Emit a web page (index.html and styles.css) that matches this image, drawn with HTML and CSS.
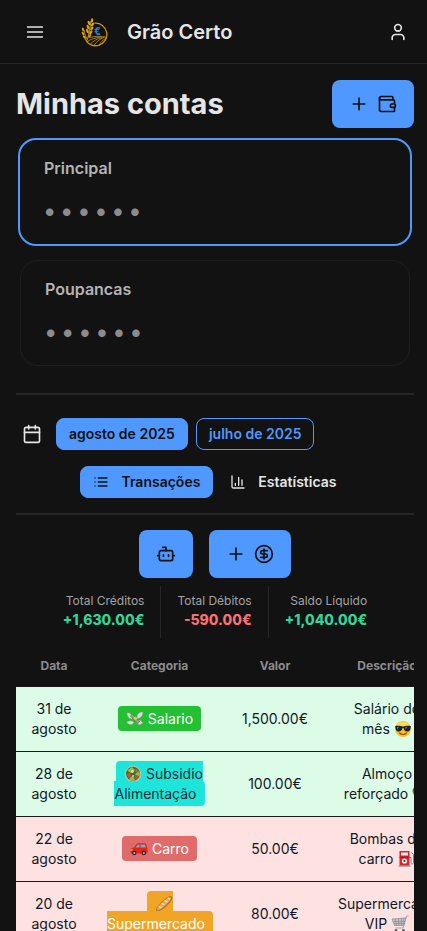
FILE: index.html
```html
<!DOCTYPE html>
<html lang="pt">
<head>
<meta charset="utf-8">
<meta name="viewport" content="width=device-width, initial-scale=1">
<title>Grão Certo</title>
<link rel="stylesheet" href="styles.css">
</head>
<body>
<header class="topbar">
  <button class="icon-btn menu-btn" type="button" aria-label="Menu">
    <svg class="icon icon-menu" viewBox="0 0 20 20"><path d="M2 5h16M2 10h16M2 15h16"/></svg>
  </button>
  <a class="brand" href="#">
    <svg class="logo" viewBox="0 0 30 30" aria-hidden="true">
      <g fill="none" stroke="#c8940f">
        <path stroke-width="1.3" d="M14.500 6.200A11.300 11.300 0 1 1 5 21.500"/>
        <path stroke-width=".8" d="M10 20.600c5-1.800 11-1.600 16.800-.3M7 25c3-2.600 8-4.200 13.500-5M10 27.500c3-3.500 7-5.800 12.500-7.200M14 28.500c2-3.500 5.500-6.500 10.500-8.300M19 28.500c1-2.500 3.500-5.500 7-7.300"/>
        <path stroke-width="1" d="M11 4c-.8 6-1.800 11-3.400 18M4 13c.5 4 2 7.500 4 10.500"/>
      </g>
      <g fill="#d9a514">
        <ellipse cx="12" cy="3.400" rx="1.200" ry="2.300" transform="rotate(12 12 3.400)"/>
        <ellipse cx="9" cy="6" rx="1.200" ry="2.300" transform="rotate(-22 9 6)"/>
        <ellipse cx="12.500" cy="7.500" rx="1.200" ry="2.300" transform="rotate(38 12.500 7.500)"/>
        <ellipse cx="8" cy="10" rx="1.200" ry="2.300" transform="rotate(-22 8 10)"/>
        <ellipse cx="11.800" cy="11.500" rx="1.200" ry="2.300" transform="rotate(38 11.800 11.500)"/>
        <ellipse cx="7.400" cy="14" rx="1.200" ry="2.300" transform="rotate(-22 7.400 14)"/>
        <ellipse cx="10.800" cy="15.500" rx="1.200" ry="2.300" transform="rotate(38 10.800 15.500)"/>
        <ellipse cx="3" cy="12.500" rx="1" ry="2" transform="rotate(-12 3 12.500)"/>
        <ellipse cx="3" cy="16.500" rx="1" ry="2" transform="rotate(-32 3 16.500)"/>
        <ellipse cx="4.300" cy="20" rx="1" ry="2" transform="rotate(-42 4.300 20)"/>
        <ellipse cx="9.800" cy="19" rx="1" ry="2" transform="rotate(35 9.800 19)"/>
      </g>
      <text class="logo-euro" x="14" y="18">€</text>
    </svg>
    <span class="brand-name">Grão Certo</span>
  </a>
  <button class="icon-btn user-btn" type="button" aria-label="Perfil">
    <svg class="icon" viewBox="0 0 24 24"><path d="M19 21v-2a4 4 0 0 0-4-4H9a4 4 0 0 0-4 4v2"/><circle cx="12" cy="7" r="4"/></svg>
  </button>
</header>

<main class="page">
  <div class="title-row">
    <h1>Minhas contas</h1>
    <button class="btn-large" type="button" aria-label="Adicionar conta">
      <svg class="icon" viewBox="0 0 24 24"><path d="M5 12h14M12 5v14"/></svg>
      <svg class="icon" viewBox="0 0 24 24"><path d="M19 7V4a1 1 0 0 0-1-1H5a2 2 0 0 0 0 4h15a1 1 0 0 1 1 1v4h-3a2 2 0 0 0 0 4h3a1 1 0 0 0 1-1v-2a1 1 0 0 0-1-1"/><path d="M3 5v14a2 2 0 0 0 2 2h15a1 1 0 0 0 1-1v-4"/></svg>
    </button>
  </div>

  <section class="accounts">
    <article class="account account-active">
      <h2>Principal</h2>
      <p class="masked">• • • • • •</p>
    </article>
    <article class="account">
      <h2>Poupancas</h2>
      <p class="masked">• • • • • •</p>
    </article>
  </section>

  <section class="filters">
    <div class="months">
      <button class="icon-btn calendar-btn" type="button" aria-label="Calendário">
        <svg class="icon" viewBox="0 0 24 24"><path d="M8 2v4M16 2v4M3 10h18"/><rect x="3" y="4" width="18" height="18" rx="2"/></svg>
      </button>
      <button class="btn btn-solid" type="button">agosto de 2025</button>
      <button class="btn btn-outline" type="button">julho de 2025</button>
    </div>
    <div class="tabs">
      <button class="btn btn-solid" type="button">
        <svg class="icon icon-small" viewBox="0 0 24 24"><path d="M8 6h13M8 12h13M8 18h13M3 6h.01M3 12h.01M3 18h.01"/></svg>
        Transações
      </button>
      <button class="btn btn-ghost" type="button">
        <svg class="icon icon-small" viewBox="0 0 24 24"><path d="M3 3v16a2 2 0 0 0 2 2h16M18 17V9M13 17V5M8 17v-3"/></svg>
        Estatísticas
      </button>
    </div>
  </section>

  <div class="actions">
    <button class="btn-large" type="button" aria-label="Assistente">
      <svg class="icon" viewBox="0 0 24 24"><path d="M12 8V4H8M2 14h2M20 14h2M15 13v2M9 13v2"/><rect x="4" y="8" width="16" height="12" rx="2"/></svg>
    </button>
    <button class="btn-large" type="button" aria-label="Adicionar transação">
      <svg class="icon" viewBox="0 0 24 24"><path d="M5 12h14M12 5v14"/></svg>
      <svg class="icon" viewBox="0 0 24 24"><circle cx="12" cy="12" r="10"/><path d="M16 8h-6a2 2 0 1 0 0 4h4a2 2 0 1 1 0 4H8M12 18V6"/></svg>
    </button>
  </div>

  <dl class="totals">
    <div class="total"><dt>Total Créditos</dt><dd class="positive">+1,630.00€</dd></div>
    <div class="total"><dt>Total Débitos</dt><dd class="negative">-590.00€</dd></div>
    <div class="total"><dt>Saldo Líquido</dt><dd class="positive">+1,040.00€</dd></div>
  </dl>

  <div class="table-wrap">
    <table class="transactions">
      <colgroup><col class="col-date"><col class="col-category"><col class="col-amount"><col class="col-description"></colgroup>
      <thead>
        <tr><th scope="col">Data</th><th scope="col">Categoria</th><th scope="col">Valor</th><th scope="col">Descrição</th></tr>
      </thead>
      <tbody>
        <tr class="credit">
          <td>31 de agosto</td>
          <td><span class="tag tag-green"><svg class="emoji" viewBox="0 0 18 18"><g fill="#d9ddd5" stroke="#8e948b" stroke-width=".5"><path d="M7 7C5 3 2 2 .7 3c.8.7.3 1.200.8 2C.9 6 2 6.500 2.500 7 2 8 4 8.500 6 9zM11 7c0-3 3-5.500 6-5-.5 1-.2 1.500-.5 2.300.3 1-.8 1.300-1 2-.5 1.200-2 2-4 2.200zM6 11c-3-.5-5 .5-5.300 2 1 .2 1.300.7 2 1 .6.8 1.500.3 2 .6C6 15 7.500 13.500 8 12zM11 10c3-.5 5 1 6.300 3.300-1 0-1.300.5-2 .7-.6.8-1.500.5-2.200.8C11.500 14 10.500 13 10 12z"/></g><path fill="#8fa773" stroke="#5b714a" stroke-width=".6" d="m4.300 6 2-1.800 7.500 7.300-2.100 1.900z"/><path fill="#e5bf70" d="m7.300 8.400 2.300-2 2 1.900-2.300 2z"/></svg> Salario</span></td>
          <td>1,500.00€</td>
          <td>Salário do mês <svg class="emoji" viewBox="0 0 18 18"><circle cx="9" cy="9" r="8" fill="#fcbf2d"/><ellipse cx="9" cy="5" rx="6" ry="3" fill="#ffdc56"/><path fill="#1b2229" d="M1 6.200C4 5.500 7 6 9 6.700c2-.7 5-1.200 8-.5l-.4 1.200C16.400 10.500 15 11.500 13 11.500S10 10 9.500 8h-1C8 10 7 11.500 5 11.500S1.600 10.500 1.400 7.400z"/><path fill="#6d7880" d="m3 7 2-.2-2 3zM11.500 7l2-.2-2 3z"/><path d="M5.500 13c2 1.900 5 1.900 7 0" fill="none" stroke="#8b4a16" stroke-width="1.100" stroke-linecap="round"/></svg></td>
        </tr>
        <tr class="credit">
          <td>28 de agosto</td>
          <td><span class="tag tag-cyan"><svg class="emoji" viewBox="0 0 18 18"><circle cx="9" cy="9" r="8.300" fill="#c4beb0"/><circle cx="9" cy="8.800" r="7" fill="#3f6e2b"/><path fill="#8fc04e" d="M3 5.500 8 2l3 3-4 3zM11 9l4-3 1 4-3 2zM5 13l4-2 2 4-4 1z"/><circle cx="5" cy="10" r="2" fill="#e04a35"/><circle cx="12.500" cy="12" r="2" fill="#d94332"/><circle cx="12.500" cy="5.500" r="1.500" fill="#d9553b"/><circle cx="8.500" cy="6.500" r="1.400" fill="#e5dfae"/><circle cx="9" cy="11" r="1" fill="#cde08b"/></svg> Subsidio Alimentação</span></td>
          <td>100.00€</td>
          <td>Almoço reforçado <svg class="emoji" viewBox="0 0 18 18"><circle cx="5" cy="6" r="4.500" fill="#476f34"/><circle cx="11" cy="5" r="4.500" fill="#4e7d37"/><circle cx="13.500" cy="9.500" r="3.500" fill="#3c652d"/><path fill="#5f8545" d="M1 7h11l-2 9H4z"/></svg></td>
        </tr>
        <tr class="debit">
          <td>22 de agosto</td>
          <td><span class="tag tag-red"><svg class="emoji" viewBox="0 0 18 18"><path fill="#e32218" d="M.5 10.500c0-1.800 1-2.600 3.500-3.100l2.300-3C7 3.500 8 3.300 10 3.300h4c1.500 0 2 .6 2.500 1.700l.7 3.500c.7 1.500.6 4-.2 5H1.500C.6 13 .5 12 .5 10.500z"/><path fill="#7fa8b8" d="m5.500 7.500 1.800-2.400c.5-.6 1-.7 2.200-.7v3.100zM10.400 4.400H14c.8 0 1.100.4 1.400 1.200l.5 1.900h-5.500z"/><circle cx="4.300" cy="13" r="2.200" fill="#27272b"/><circle cx="13.800" cy="13" r="2.200" fill="#27272b"/><circle cx="4.300" cy="13" r="1" fill="#b8bbc0"/><circle cx="13.800" cy="13" r="1" fill="#b8bbc0"/><path fill="#ffd08c" d="M1 9.400h1.700v1.200H.7z"/></svg> Carro</span></td>
          <td>50.00€</td>
          <td>Bombas do carro <svg class="emoji" viewBox="0 0 18 18"><path fill="#d8232d" d="M2.500 1h10v15h-10z"/><path fill="#a7adb0" d="M1.500 15.500h12V17h-12z"/><path fill="#e8eef0" d="M4 2.500h7v3H4z"/><path fill="#9e161f" d="M2.500 6.700h10v1h-10z"/><circle cx="7.500" cy="11" r="2.600" fill="#f5f3ef"/><circle cx="7.500" cy="11" r="1.100" fill="#31363a"/><path d="M12.500 7.500h1.500v5c0 2 2.500 2 2.500 0v-8l-2-2" fill="none" stroke="#777c80"/></svg></td>
        </tr>
        <tr class="debit">
          <td>20 de agosto</td>
          <td><span class="tag tag-orange"><svg class="emoji" viewBox="0 0 18 18"><path fill="#b36f27" d="M1 15C.3 12.500 12 .8 15.500 1c2 .2 2.200 1.800 1.500 3.500C15.500 8 6 17 2.500 16.500c-.9-.1-1.300-.7-1.500-1.500z"/><path fill="#e3ad60" d="M2 14C2.500 11.500 12.500 2 15 2c1.300.3 1 1.500.5 2.500C13.500 8 5.500 15 3 15.300c-.7 0-1-.6-1-1.300z"/><path stroke="#ffe6ad" stroke-width="1.300" stroke-linecap="round" d="m4 11.500 2 1M7 8.500l2 1.200M10 5.500l2 1.300M13 3l1.700 1.200"/></svg> Supermercado</span></td>
          <td>80.00€</td>
          <td>Supermercado VIP <svg class="emoji" viewBox="0 0 18 18"><path fill="#c6c6c8" d="m1 4 14.500-1.500-2.500 8H3.500z"/><g fill="none" stroke="#88898d" stroke-width=".7"><path d="m1 4 14-1-2 7.500H3.500zM2 6.500h12M3 8.500h10.500M4.500 4l1 6.500M7.500 4l.3 6.500M10.500 4l-.3 6.500M13 3.500l-1 7"/><path d="M12.800 10.500 12 13H4.500M15 3l.7-2"/></g><path stroke="#c9a9a8" stroke-width="1.200" d="m15.500 1.200 2-.4"/><circle cx="5" cy="15.500" r="1.400" fill="#626267"/><circle cx="12.500" cy="15.500" r="1.400" fill="#626267"/></svg></td>
        </tr>
      </tbody>
    </table>
  </div>
</main>
</body>
</html>
```
FILE: styles.css
```css
* { box-sizing: border-box; }

:root {
  --bg: #121212;
  --line: #262626;
  --text: #e5e5e5;
  --muted: #a3a3a3;
  --primary: #4f98ff;
}

body {
  margin: 0;
  background: var(--bg);
  color: var(--text);
  font-family: Inter, "Liberation Sans", sans-serif;
  font-size: 14px;
  line-height: 20px;
}

h1, h2, p, dl, dd { margin: 0; }

button {
  font: inherit;
  color: inherit;
  border: 0;
  background: none;
  padding: 0;
  cursor: pointer;
}

.icon {
  display: block;
  flex: none;
  width: 20px;
  height: 20px;
  fill: none;
  stroke: currentColor;
  stroke-width: 2;
  stroke-linecap: round;
  stroke-linejoin: round;
}
.icon-small { width: 16px; height: 16px; }
.icon-menu { stroke-linecap: butt; }

.icon-btn {
  display: flex;
  align-items: center;
  justify-content: center;
  width: 32px;
  height: 32px;
}

/* Top bar */
.topbar {
  display: flex;
  align-items: center;
  height: 64px;
  padding: 1px 13px 0 19px;
  border-bottom: 1px solid var(--line);
}
.menu-btn { color: #b0b0b0; }
.brand {
  display: flex;
  align-items: center;
  gap: 17px;
  margin-left: 29px;
  color: inherit;
  text-decoration: none;
}
.logo { width: 30px; height: 30px; }
.logo-euro {
  font-size: 10px;
  font-weight: 800;
  fill: #2b7be0;
}
.brand-name {
  font-size: 20px;
  line-height: 28px;
  font-weight: 600;
}
.user-btn { margin-left: auto; }

/* Page */
.page { padding: 16px 13px 16px 16px; }

.title-row {
  display: flex;
  align-items: center;
  justify-content: space-between;
}
h1 {
  font-size: 29px;
  line-height: 36px;
  font-weight: 700;
}

.btn-large {
  display: flex;
  align-items: center;
  gap: 8px;
  height: 48px;
  padding: 0 17px;
  border-radius: 8px;
  background: var(--primary);
  color: var(--bg);
}

/* Accounts */
.accounts {
  display: flex;
  flex-direction: column;
  gap: 14px;
  padding: 10px 4px 27px;
  border-bottom: 2px solid var(--line);
}
.account {
  padding: 16px 24px;
  min-height: 106px;
  border: 1px solid #1e1e1e;
  border-radius: 18px;
}
.account-active {
  min-height: 108px;
  margin: 0 -2px;
  border: 2px solid var(--primary);
}
.account h2 {
  color: #b4b4b4;
  font-size: 16px;
  line-height: 24px;
  font-weight: 600;
}
.masked {
  margin-top: 15px;
  color: #8c8c8c;
  font-size: 24px;
  line-height: 32px;
  font-weight: 700;
}

/* Filters */
.filters {
  display: flex;
  flex-direction: column;
  gap: 16px;
  padding: 23px 0 15px;
  border-bottom: 2px solid var(--line);
}
.months { display: flex; gap: 8px; }
.tabs { display: flex; justify-content: center; gap: 4px; }

.btn {
  display: flex;
  align-items: center;
  gap: 12px;
  height: 32px;
  padding: 0 12px;
  border: 1px solid transparent;
  border-radius: 8px;
  font-weight: 600;
}
.btn-solid {
  border-color: var(--primary);
  background: var(--primary);
  color: var(--bg);
}
.btn-outline {
  border-color: var(--primary);
  color: var(--primary);
}

.actions {
  display: flex;
  justify-content: center;
  gap: 16px;
  padding: 15px 0 8px;
}

/* Totals */
.totals { display: flex; justify-content: center; }
.total {
  padding: 6px 16px 8px;
  text-align: right;
}
.total + .total { border-left: 1px solid var(--line); }
.total dt {
  color: var(--muted);
  font-size: 12px;
  line-height: 18px;
}
.total dd { font-weight: 800; }
.positive { color: #34d399; }
.negative { color: #f87171; }

/* Transactions */
.table-wrap { margin-top: 8px; overflow: hidden; }
.transactions {
  table-layout: fixed;
  width: 435px;
  border-collapse: separate;
  border-spacing: 0;
  text-align: center;
}
.col-date { width: 76px; }
.col-category { width: 135px; }
.col-amount { width: 96px; }
.col-description { width: 128px; }

.transactions th {
  height: 40px;
  padding: 0;
  color: #8c8c8c;
  font-size: 12px;
  line-height: 16px;
  font-weight: 700;
}
.transactions td {
  padding: 12px 15px;
  border-top: 1px solid #1a1a1a;
}
.credit { background: #dcfce7; color: #111827; }
.debit { background: #fee2e2; color: #111827; }

.tag {
  padding: 4px 8px;
  border-radius: 4px;
}
.tag-green { background: #22c032; color: #fff; }
.tag-cyan { background: #1de5da; color: #1f2937; }
.tag-red { background: #df6b6b; color: #fff; }
.tag-orange { background: #f0a526; color: #fff; }

.emoji {
  width: 18px;
  height: 18px;
  vertical-align: -4px;
}
```
